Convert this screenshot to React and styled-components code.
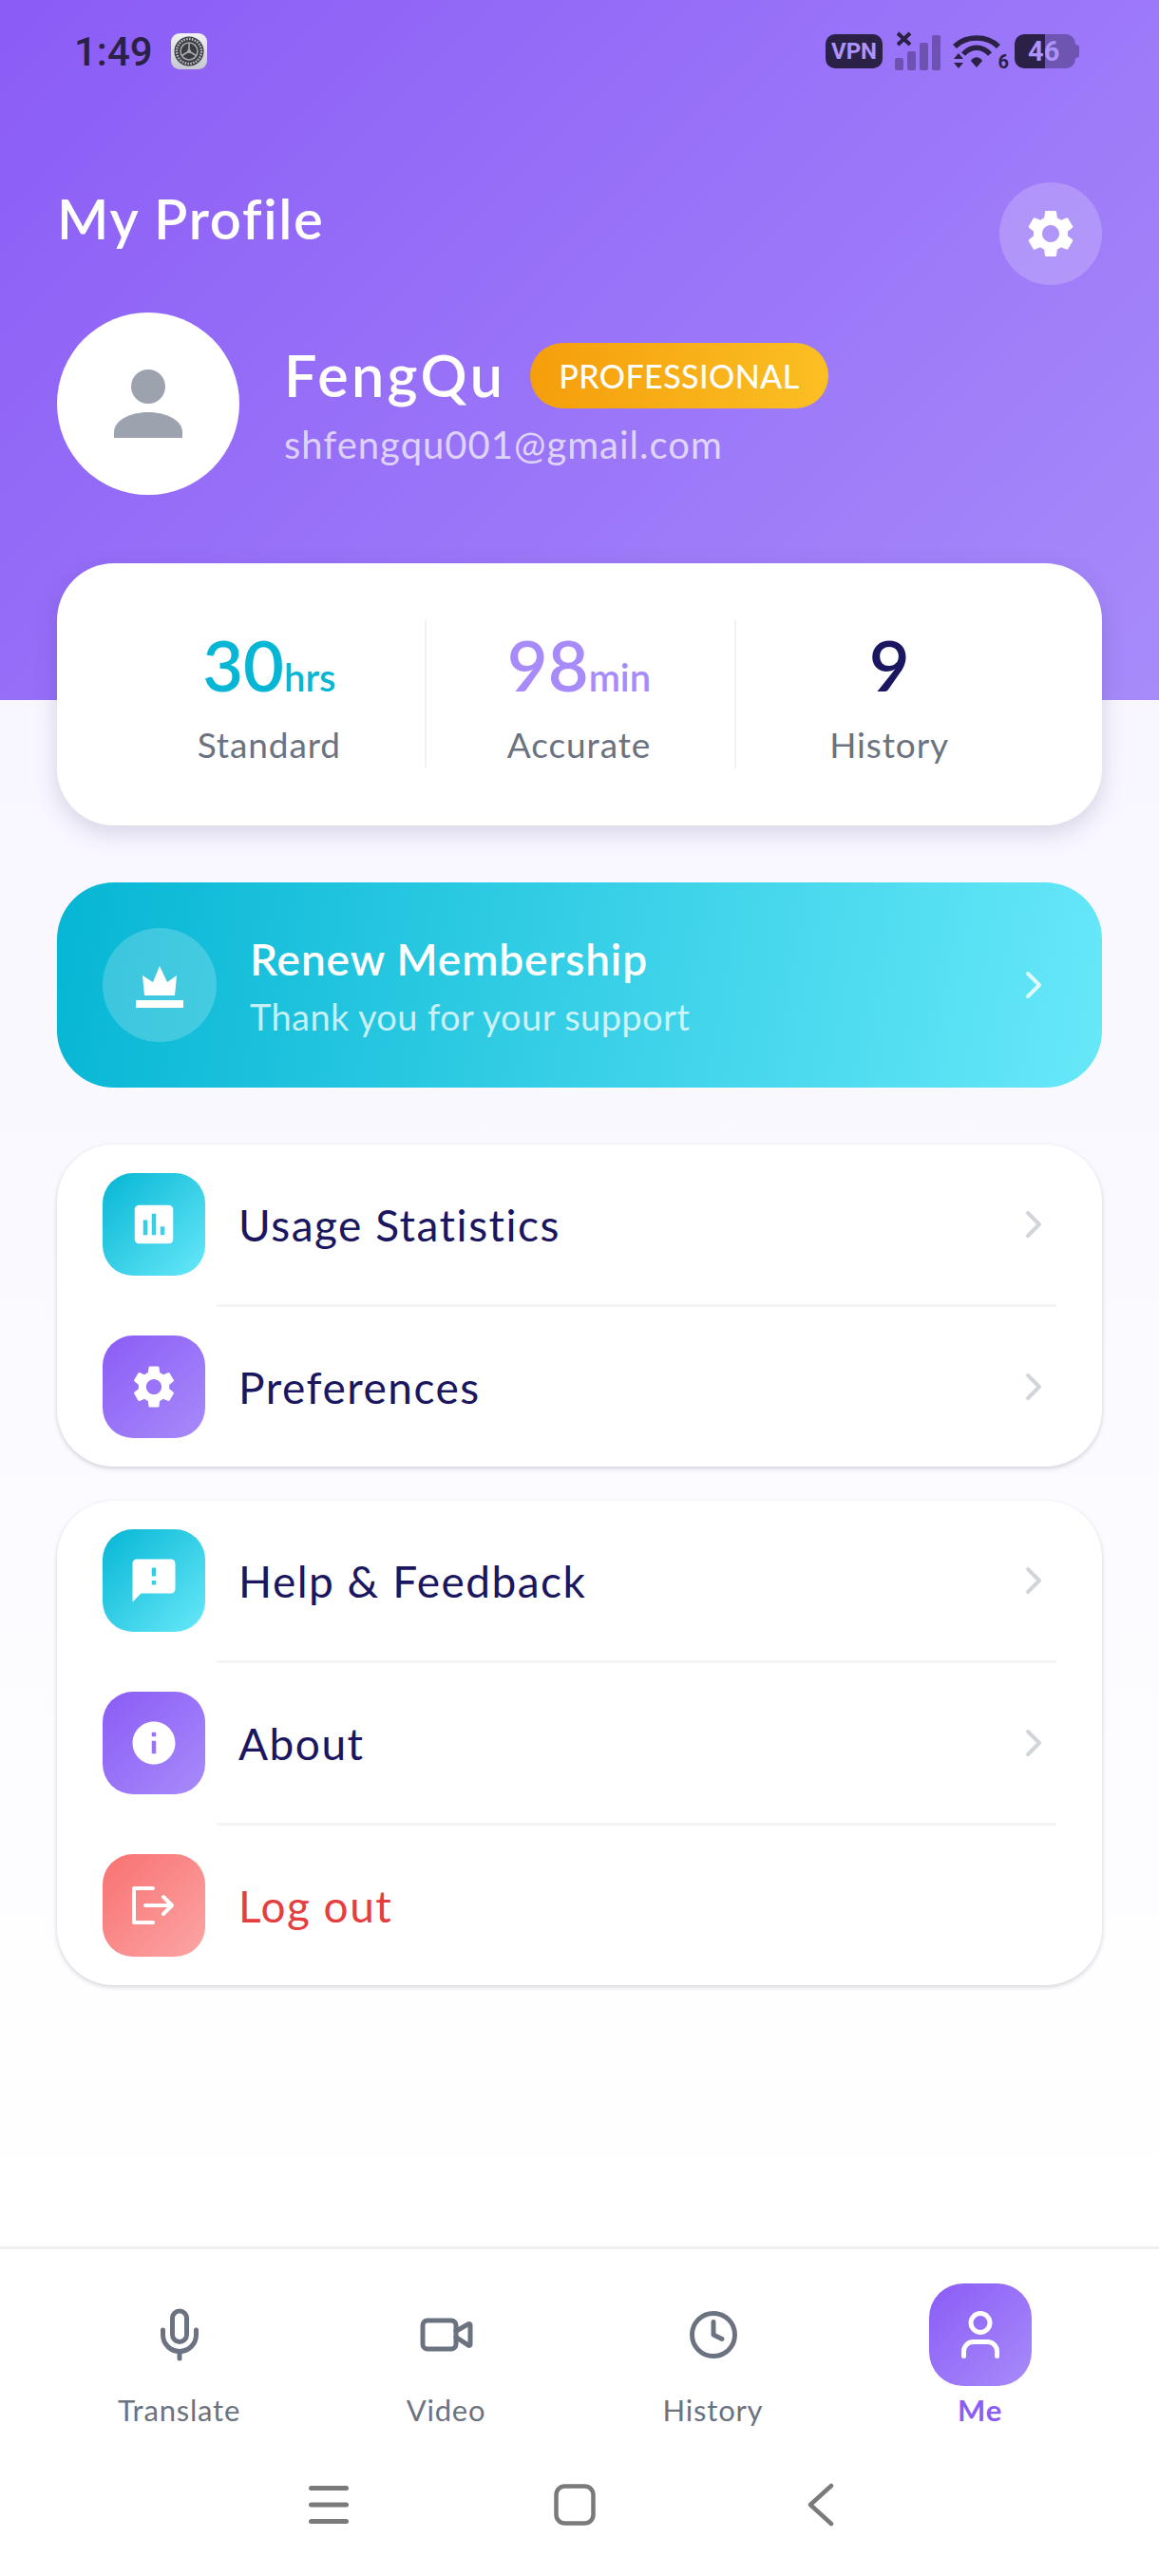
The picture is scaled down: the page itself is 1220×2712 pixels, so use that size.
import React from "react"
import styled, { createGlobalStyle } from "styled-components"
import { Mic, Video, Clock, User, ChevronRight } from "lucide-react"
import { MdSettings, MdAssessment, MdFeedback, MdInfo } from "react-icons/md"

const PURPLE = "linear-gradient(135deg, #8b5cf6, #a78bfa)"
const CYAN = "linear-gradient(135deg, #06b6d4, #67e8f9)"
const RED = "linear-gradient(135deg, #f87171, #fca5a5)"
const NAVY = "#1b1660"
const DARK = "#2b2146"

const GlobalStyle = createGlobalStyle`
  html, body { margin: 0; padding: 0; background: #fff; }
  * { box-sizing: border-box; }
  body { font-family: Lato, "Noto Sans", sans-serif; }
`

//status bar icons
const AppIcon = () => (
  <AppIconBox>
    <svg width="32" height="32" viewBox="0 0 32 32">
      <circle cx="16" cy="16" r="15.5" fill="#3b3c42" />
      <circle cx="16" cy="16" r="13" fill="none" stroke="#b9bbc2" strokeWidth="2.5" strokeDasharray="1.6 1.3" />
      <circle cx="16" cy="16" r="9" fill="none" stroke="#a9abb3" strokeWidth="1.5" />
      <path d="M16 16V7M16 16L8.5 20.5M16 16L23.5 20.5" stroke="#a9abb3" strokeWidth="1.6" />
      <circle cx="16" cy="16" r="2" fill="#a9abb3" />
    </svg>
  </AppIconBox>
)

const SignalIcon = () => (
  <svg width="48" height="42" viewBox="0 0 48 42">
    <g fill={DARK} fillOpacity="0.4">
      <rect x="0" y="28" width="9" height="13" rx="2" />
      <rect x="13" y="21" width="9" height="20" rx="2" />
      <rect x="26" y="12" width="9" height="29" rx="2" />
      <rect x="39" y="4" width="9" height="37" rx="2" />
    </g>
    <path d="M3 2L16 14M16 2L3 14" stroke={DARK} strokeWidth="4" />
  </svg>
)

const WifiIcon = () => (
  <WifiBox>
    <svg width="50" height="38" viewBox="0 0 50 38">
      <path d="M2 14C14 2 36 2 48 14" fill="none" stroke={DARK} strokeWidth="5.5" />
      <path d="M11 22C19 13 31 13 39 22" fill="none" stroke={DARK} strokeWidth="5.5" />
      <path d="M19 29C22 24 28 24 31 29L25 36Z" fill={DARK} />
      <path d="M1 27L6 21L11 27ZM1 31L11 31L6 37Z" fill={DARK} />
    </svg>
    <WifiDigit>6</WifiDigit>
  </WifiBox>
)

const BatteryIcon = () => (
  <BatteryBox>
    <BatteryFill />
    <BatteryRest />
    <BatteryTip />
    <BatteryText>46</BatteryText>
  </BatteryBox>
)

const LogoutIcon = () => (
  <svg width="54" height="54" viewBox="0 0 54 54" fill="none" stroke="#fff" strokeWidth="4" strokeLinecap="round" strokeLinejoin="round">
    <path d="M26 9H6V45H26" />
    <path d="M18 27H46M37 18L46 27L37 36" />
  </svg>
)

const CrownIcon = () => (
  <svg width="60" height="60" viewBox="0 0 60 60" fill="#fff">
    <path d="M12 20L23 27L30 10L38 27L48 20L46 41H14Z" />
    <rect x="5" y="46" width="50" height="8" />
  </svg>
)

const AvatarPerson = () => (
  <svg width="72" height="72" viewBox="0 0 72 72" fill="#9ca3af">
    <circle cx="36" cy="18" r="18" />
    <path d="M0 72V66C0 54 16 45 36 45S72 54 72 66V72Z" />
  </svg>
)

const MenuRow = ({ icon, tone, label, danger, last }) => (
  <>
    <Row>
      <RowIcon $tone={tone}>{icon}</RowIcon>
      <RowLabel $danger={danger}>{label}</RowLabel>
      {!danger && <ChevronRight size={48} color="#d1d5db" strokeWidth={2} />}
    </Row>
    {!last && <Divider />}
  </>
)

const App = () => {
  return (
    <Page>
      <GlobalStyle />
      <Header>
        <StatusBar>
          <StatusLeft>
            <Time>1:49</Time>
            <AppIcon />
          </StatusLeft>
          <StatusRight>
            <VpnPill>VPN</VpnPill>
            <SignalIcon />
            <WifiIcon />
            <BatteryIcon />
          </StatusRight>
        </StatusBar>
        <TitleRow>
          <Title>My Profile</Title>
          <SettingsButton><MdSettings size={60} color="#fff" /></SettingsButton>
        </TitleRow>
        <ProfileRow>
          <Avatar><AvatarPerson /></Avatar>
          <ProfileInfo>
            <NameRow>
              <Name>FengQu</Name>
              <Badge>PROFESSIONAL</Badge>
            </NameRow>
            <Email>shfengqu001@gmail.com</Email>
          </ProfileInfo>
        </ProfileRow>
      </Header>

      <Main>
        <StatsCard>
          <Stat>
            <StatValue $color="#06b6d4">30<StatUnit>hrs</StatUnit></StatValue>
            <StatLabel>Standard</StatLabel>
          </Stat>
          <Stat $divider>
            <StatValue $color="#a78bfa">98<StatUnit>min</StatUnit></StatValue>
            <StatLabel>Accurate</StatLabel>
          </Stat>
          <Stat $divider>
            <StatValue $color={NAVY}>9</StatValue>
            <StatLabel>History</StatLabel>
          </Stat>
        </StatsCard>

        <Banner>
          <BannerIcon><CrownIcon /></BannerIcon>
          <BannerText>
            <BannerTitle>Renew Membership</BannerTitle>
            <BannerSub>Thank you for your support</BannerSub>
          </BannerText>
          <ChevronRight size={48} color="rgba(255,255,255,0.8)" strokeWidth={2} />
        </Banner>

        <MenuCard>
          <MenuRow tone={CYAN} icon={<MdAssessment size={54} color="#fff" />} label="Usage Statistics" />
          <MenuRow tone={PURPLE} icon={<MdSettings size={54} color="#fff" />} label="Preferences" last />
        </MenuCard>

        <MenuCard $near>
          <MenuRow tone={CYAN} icon={<MdFeedback size={54} color="#fff" />} label="Help & Feedback" />
          <MenuRow tone={PURPLE} icon={<MdInfo size={54} color="#fff" />} label="About" />
          <MenuRow tone={RED} icon={<LogoutIcon />} label="Log out" danger last />
        </MenuCard>
      </Main>

      <BottomNav>
        <NavItem>
          <NavIcon><Mic size={60} color="#6b7280" strokeWidth={2} /></NavIcon>
          <NavLabel>Translate</NavLabel>
        </NavItem>
        <NavItem>
          <NavIcon><Video size={60} color="#6b7280" strokeWidth={2} /></NavIcon>
          <NavLabel>Video</NavLabel>
        </NavItem>
        <NavItem>
          <NavIcon><Clock size={54} color="#6b7280" strokeWidth={2.2} /></NavIcon>
          <NavLabel>History</NavLabel>
        </NavItem>
        <NavItem>
          <NavIcon $active><User size={60} color="#fff" strokeWidth={2} /></NavIcon>
          <NavLabel $active>Me</NavLabel>
        </NavItem>
      </BottomNav>

      <SystemBar>
        <SystemSlot>
          <svg width="42" height="40" viewBox="0 0 42 40" fill="#7a7a7a">
            <rect x="0" y="0" width="42" height="5" rx="2.5" />
            <rect x="0" y="17.5" width="42" height="5" rx="2.5" />
            <rect x="0" y="35" width="42" height="5" rx="2.5" />
          </svg>
        </SystemSlot>
        <SystemSlot>
          <svg width="44" height="44" viewBox="0 0 44 44" fill="none" stroke="#7a7a7a" strokeWidth="4.5">
            <rect x="2.5" y="2.5" width="39" height="39" rx="9" />
          </svg>
        </SystemSlot>
        <SystemSlot>
          <svg width="28" height="46" viewBox="0 0 28 46" fill="none" stroke="#7a7a7a" strokeWidth="4.5" strokeLinecap="round" strokeLinejoin="round">
            <path d="M25 3L3 23L25 43" />
          </svg>
        </SystemSlot>
      </SystemBar>
    </Page>
  )
}

const Page = styled.div`
  width: 1220px;
  height: 2712px;
  display: flex;
  flex-direction: column;
  overflow: hidden;
  background: #fff;
`

const Header = styled.header`
  height: 737px;
  flex-shrink: 0;
  padding: 0 60px;
  background: linear-gradient(135deg, #8b5cf6, #a78bfa);
`

const StatusBar = styled.div`
  height: 192px;
  margin: 0 23px 0 18px;
  padding-top: 32px;
  display: flex;
  justify-content: space-between;
  align-items: flex-start;
`

const StatusLeft = styled.div`
  display: flex;
  align-items: center;
  gap: 19px;
  height: 44px;
`

const Time = styled.span`
  font-family: Roboto, sans-serif;
  font-size: 42px;
  font-weight: 500;
  color: ${DARK};
`

const AppIconBox = styled.div`
  width: 38px;
  height: 38px;
  border-radius: 9px;
  display: flex;
  align-items: center;
  justify-content: center;
  background: linear-gradient(180deg, #f0f1f4, #c6c8d0);
`

const StatusRight = styled.div`
  display: flex;
  align-items: center;
  gap: 13px;
  height: 44px;
`

const VpnPill = styled.span`
  width: 60px;
  height: 36px;
  border-radius: 10px;
  background: ${DARK};
  color: #ad93fb;
  font-family: Roboto, sans-serif;
  font-size: 24px;
  font-weight: 700;
  display: flex;
  align-items: center;
  justify-content: center;
`

const WifiBox = styled.div`
  display: flex;
  align-items: flex-end;
  width: 52px;
  position: relative;
`

const WifiDigit = styled.span`
  position: absolute;
  right: -7px;
  bottom: -4px;
  font-family: Roboto, sans-serif;
  font-size: 20px;
  font-weight: 700;
  color: ${DARK};
`

const BatteryBox = styled.div`
  width: 69px;
  height: 36px;
  display: flex;
  align-items: center;
  position: relative;
`

const BatteryFill = styled.div`
  width: 32px;
  height: 36px;
  background: ${DARK};
  border-radius: 10px 0 0 10px;
`

const BatteryRest = styled.div`
  width: 32px;
  height: 36px;
  background: rgba(43, 33, 70, 0.4);
  border-radius: 0 10px 10px 0;
`

const BatteryTip = styled.div`
  width: 4px;
  height: 14px;
  background: rgba(43, 33, 70, 0.4);
  border-radius: 0 3px 3px 0;
`

const BatteryText = styled.span`
  position: absolute;
  left: 14px;
  top: 1px;
  font-family: Roboto, sans-serif;
  font-size: 29px;
  font-weight: 700;
  line-height: 34px;
  color: #ad93fb;
`

const TitleRow = styled.div`
  height: 137px;
  display: flex;
  justify-content: space-between;
  align-items: flex-start;
`

const Title = styled.h1`
  margin: -2px 0 0;
  font-size: 58px;
  font-weight: 600;
  letter-spacing: 1.7px;
  line-height: 80px;
  color: #fff;
`

const SettingsButton = styled.div`
  width: 108px;
  height: 108px;
  border-radius: 50%;
  background: rgba(255, 255, 255, 0.2);
  display: flex;
  align-items: center;
  justify-content: center;
`

const ProfileRow = styled.div`
  display: flex;
  align-items: center;
  gap: 47px;
`

const Avatar = styled.div`
  width: 192px;
  height: 192px;
  border-radius: 50%;
  background: #fff;
  border: 4px solid rgba(255, 255, 255, 0.85);
  display: flex;
  align-items: center;
  justify-content: center;
`

const ProfileInfo = styled.div`
  padding-top: 3px;
  display: flex;
  flex-direction: column;
  gap: 13px;
`

const NameRow = styled.div`
  display: flex;
  align-items: center;
  gap: 26px;
`

const Name = styled.span`
  font-size: 61px;
  font-weight: 600;
  letter-spacing: 3.4px;
  line-height: 70px;
  color: #fff;
`

const Badge = styled.span`
  height: 69px;
  padding: 0 30px;
  border-radius: 35px;
  background: linear-gradient(90deg, #f59e0b, #fbbf24);
  color: #fff;
  font-size: 34px;
  font-weight: 500;
  letter-spacing: 0.4px;
  display: flex;
  align-items: center;
`

const Email = styled.span`
  font-size: 40px;
  letter-spacing: 1px;
  line-height: 50px;
  color: rgba(255, 255, 255, 0.7);
`

const Main = styled.main`
  flex: 1;
  display: flex;
  flex-direction: column;
  padding: 0 60px;
  background: linear-gradient(180deg, #f8f6ff, #ffffff);
`

const StatsCard = styled.section`
  position: relative;
  margin-top: -144px;
  padding: 60px;
  display: grid;
  grid-template-columns: repeat(3, 1fr);
  background: #fff;
  border-radius: 60px;
  box-shadow: 0 8px 24px rgba(60, 50, 110, 0.18);
`

const Stat = styled.div`
  height: 156px;
  padding-right: ${(p) => (p.$divider ? "3px" : "0")};
  display: flex;
  flex-direction: column;
  align-items: center;
  justify-content: center;
  gap: 22px;
  border-left: ${(p) => (p.$divider ? "2px solid #f1f1f4" : "none")};
`

const StatValue = styled.div`
  height: 84px;
  padding-top: 4px;
  font-size: 74px;
  font-weight: 600;
  line-height: 80px;
  color: ${(p) => p.$color};
`

const StatUnit = styled.span`
  font-size: 40px;
  font-weight: 600;
`

const StatLabel = styled.div`
  font-size: 37px;
  letter-spacing: 0.9px;
  line-height: 44px;
  color: #6b7280;
`

const Banner = styled.section`
  height: 216px;
  margin-top: 60px;
  padding: 0 48px;
  display: flex;
  align-items: center;
  gap: 35px;
  border-radius: 60px;
  background: linear-gradient(100deg, #06b6d4, #67e8f9);
`

const BannerIcon = styled.div`
  width: 120px;
  height: 120px;
  border-radius: 50%;
  background: rgba(255, 255, 255, 0.2);
  display: flex;
  align-items: center;
  justify-content: center;
`

const BannerText = styled.div`
  flex: 1;
  display: flex;
  flex-direction: column;
  gap: 9px;
`

const BannerTitle = styled.div`
  font-size: 46px;
  font-weight: 600;
  letter-spacing: 0.9px;
  line-height: 56px;
  color: #fff;
`

const BannerSub = styled.div`
  font-size: 38px;
  letter-spacing: 0.4px;
  line-height: 46px;
  color: rgba(255, 255, 255, 0.75);
`

const MenuCard = styled.section`
  margin-top: ${(p) => (p.$near ? "36px" : "60px")};
  background: #fff;
  border-radius: 60px;
  box-shadow: 0 2px 5px rgba(40, 40, 70, 0.2);
`

const Row = styled.div`
  height: 168px;
  padding: 30px 48px;
  display: flex;
  align-items: center;
  gap: 35px;
`

const RowIcon = styled.div`
  width: 108px;
  height: 108px;
  border-radius: 32px;
  background: ${(p) => p.$tone};
  display: flex;
  align-items: center;
  justify-content: center;
`

const RowLabel = styled.div`
  flex: 1;
  font-size: 46px;
  letter-spacing: 1.5px;
  color: ${(p) => (p.$danger ? "#e53e3e" : NAVY)};
`

const Divider = styled.div`
  height: 3px;
  margin: 0 48px 0 168px;
  background: #f3f4f6;
`

const BottomNav = styled.nav`
  height: 210px;
  flex-shrink: 0;
  padding: 36px 48px 0;
  display: grid;
  grid-template-columns: repeat(4, 1fr);
  border-top: 3px solid #f0f0f2;
  background: #fff;
`

const NavItem = styled.div`
  display: flex;
  flex-direction: column;
  align-items: center;
  gap: 6px;
`

const NavIcon = styled.div`
  width: 108px;
  height: 108px;
  border-radius: 36px;
  background: ${(p) => (p.$active ? PURPLE : "transparent")};
  display: flex;
  align-items: center;
  justify-content: center;
`

const NavLabel = styled.span`
  font-size: 31px;
  letter-spacing: 0.8px;
  line-height: 38px;
  font-weight: ${(p) => (p.$active ? 700 : 400)};
  color: ${(p) => (p.$active ? "#8b5cf6" : "#6b7280")};
`

const SystemBar = styled.div`
  height: 137px;
  flex-shrink: 0;
  padding: 0 10px 13px 0;
  display: flex;
  justify-content: center;
  align-items: center;
  background: #fff;
`

const SystemSlot = styled.div`
  width: 259px;
  display: flex;
  justify-content: center;
`

export default App
